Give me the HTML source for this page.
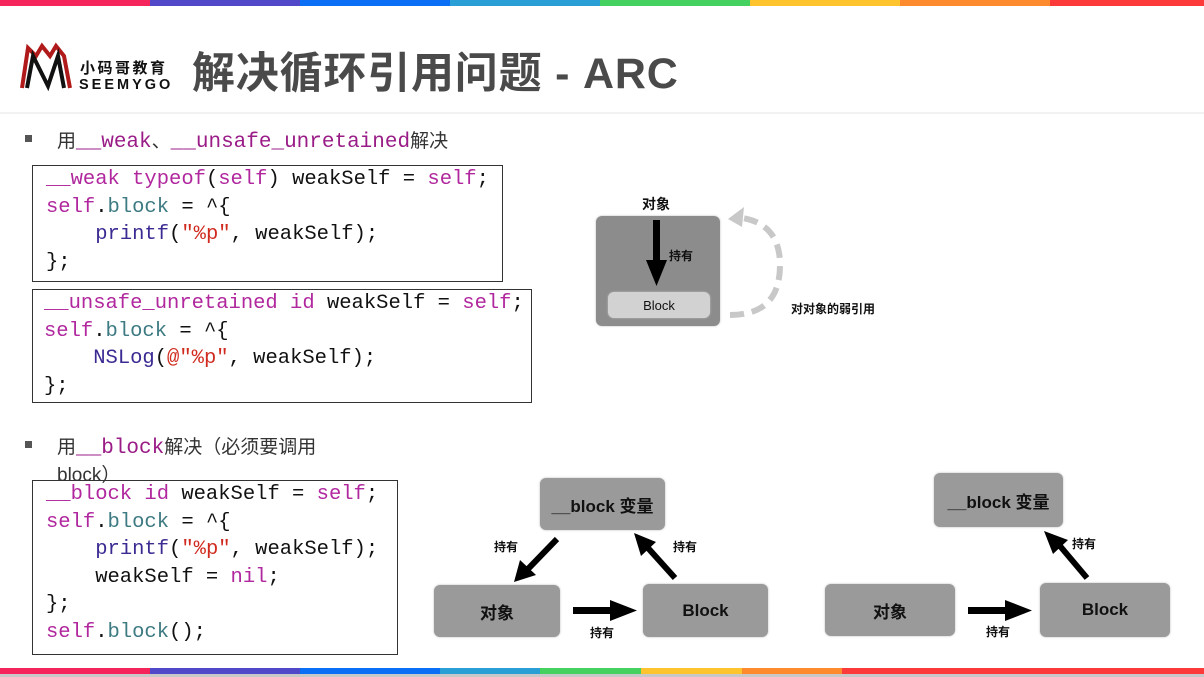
<!DOCTYPE html>
<html><head><meta charset="utf-8"><style>
*{margin:0;padding:0;box-sizing:border-box}
body{width:1204px;height:677px;background:#fff;position:relative;overflow:hidden;font-family:"Liberation Sans","Noto Sans CJK SC",sans-serif}
.bar{position:absolute;height:6px}
.abs{position:absolute;white-space:nowrap}
.code{position:absolute;border:1.5px solid #333;font-family:"Liberation Mono","DejaVu Sans Mono",monospace;font-size:20.5px;line-height:27.5px;color:#111;padding:0 0 0 13px;white-space:pre}
.k{color:#b0279e}.t{color:#3d7a82}.f{color:#3b2a92}.s{color:#d02a1e}
.bullet{position:absolute;width:7px;height:7px;background:#555}
.txt{font-size:19px;color:#333}
.m{font-family:"Liberation Mono",monospace;color:#9a1c87;font-size:21px}
.box{position:absolute;background:#9a9a9a;border-radius:6px;display:flex;align-items:center;justify-content:center;font-size:17px;color:#111;font-weight:bold;box-shadow:0 0 2px #bbb}
.lab{position:absolute;font-size:12px;font-weight:bold;color:#111;white-space:nowrap}
</style></head><body>
<div class="bar" style="top:0;left:0;width:150px;background:#f5245a"></div>
<div class="bar" style="top:0;left:150px;width:150px;background:#5048c8"></div>
<div class="bar" style="top:0;left:300px;width:150px;background:#0a6ff5"></div>
<div class="bar" style="top:0;left:450px;width:150px;background:#2a9fd6"></div>
<div class="bar" style="top:0;left:600px;width:150px;background:#44d160"></div>
<div class="bar" style="top:0;left:750px;width:150px;background:#fdc42d"></div>
<div class="bar" style="top:0;left:900px;width:150px;background:#fd8a2c"></div>
<div class="bar" style="top:0;left:1050px;width:154px;background:#fc3a3a"></div>

<svg class="abs" style="left:18px;top:42px" width="60" height="50" viewBox="0 0 60 50">
<path d="M4 46 L10 6 L18 14 L24 4 L32 14 L38 4 L46 14 L52 46" fill="none" stroke="#b01a1a" stroke-width="4"/>
<path d="M9 46 L15 14 L30 44 L40 14 L46 46" fill="none" stroke="#111" stroke-width="4"/>
</svg>
<div class="abs" style="left:80px;top:59px;font-size:15px;letter-spacing:2.5px;color:#111;font-weight:bold;font-family:'Noto Sans CJK SC',sans-serif;line-height:17px">小码哥教育</div>
<div class="abs" style="left:79px;top:77px;font-size:14.5px;letter-spacing:3px;color:#111;font-weight:bold;line-height:16px">SEEMYGO</div>
<div class="abs" style="left:192px;top:47px;font-size:43px;letter-spacing:0.8px;font-weight:bold;color:#4a4a4a;line-height:54px">解决循环引用问题 - ARC</div>
<div class="abs" style="left:0;top:112px;width:1204px;height:2px;background:#f2f2f2"></div>

<div class="bullet" style="left:25px;top:135px"></div>
<div class="abs txt" style="left:57px;top:126px">用<span class="m">__weak</span>、<span class="m">__unsafe_unretained</span>解决</div>

<div class="code" style="left:32px;top:165px;width:471px;height:117px;padding-top:0"><span class="k">__weak typeof</span>(<span class="k">self</span>) weakSelf = <span class="k">self</span>;
<span class="k">self</span>.<span class="t">block</span> = ^{
    <span class="f">printf</span>(<span class="s">"%p"</span>, weakSelf);
};</div>
<div class="code" style="left:32px;top:289px;width:500px;height:114px;padding-left:11px"><span class="k">__unsafe_unretained id</span> weakSelf = <span class="k">self</span>;
<span class="k">self</span>.<span class="t">block</span> = ^{
    <span class="f">NSLog</span>(<span class="s">@"%p"</span>, weakSelf);
};</div>

<div class="bullet" style="left:25px;top:441px"></div>
<div class="abs txt" style="left:57px;top:432px">用<span class="m">__block</span>解决（必须要调用</div>
<div class="abs txt" style="left:57px;top:460px">block）</div>
<div class="code" style="left:32px;top:480px;width:366px;height:175px"><span class="k">__block id</span> weakSelf = <span class="k">self</span>;
<span class="k">self</span>.<span class="t">block</span> = ^{
    <span class="f">printf</span>(<span class="s">"%p"</span>, weakSelf);
    weakSelf = <span class="k">nil</span>;
};
<span class="k">self</span>.<span class="t">block</span>();</div>

<!-- diagram 1 -->
<div class="lab" style="left:642px;top:194px;font-size:14px">对象</div>
<div class="box" style="left:596px;top:216px;width:124px;height:110px;background:#8c8c8c"></div>
<div class="box" style="left:608px;top:292px;width:102px;height:26px;background:#d2d2d2;font-size:13px;font-weight:normal">Block</div>
<svg class="abs" style="left:640px;top:220px" width="40" height="70"><rect x="13" y="0" width="7" height="42" fill="#000"/><path d="M6 40 L27 40 L16.5 66 Z" fill="#000"/></svg>
<div class="lab" style="left:669px;top:247px">持有</div>
<svg class="abs" style="left:720px;top:205px" width="70" height="120"><path d="M10 110 Q60 110 60 60 Q60 15 14 12" fill="none" stroke="#c8c8c8" stroke-width="6" stroke-dasharray="14 8"/><path d="M8 14 L24 2 L22 22 Z" fill="#c8c8c8"/></svg>
<div class="lab" style="left:791px;top:300px">对对象的弱引用</div>

<!-- diagram 2 -->
<div class="box" style="left:540px;top:478px;width:125px;height:52px">__block 变量</div>
<div class="box" style="left:434px;top:585px;width:126px;height:52px">对象</div>
<div class="box" style="left:643px;top:584px;width:125px;height:53px">Block</div>
<svg class="abs" style="left:420px;top:520px" width="360" height="110">
<line x1="137" y1="19" x2="107" y2="50" stroke="#000" stroke-width="6"/><path d="M94 62 L100 40 L116 55 Z" fill="#000"/>
<line x1="255" y1="58" x2="228" y2="28" stroke="#000" stroke-width="6"/><path d="M214 13 L236 22 L221 36 Z" fill="#000"/>
<rect x="153" y="87" width="40" height="7" fill="#000"/><path d="M190 80 L217 90.5 L190 101 Z" fill="#000"/>
</svg>
<div class="lab" style="left:494px;top:538px">持有</div>
<div class="lab" style="left:673px;top:538px">持有</div>
<div class="lab" style="left:590px;top:624px">持有</div>

<div class="box" style="left:934px;top:473px;width:129px;height:54px">__block 变量</div>
<div class="box" style="left:825px;top:584px;width:130px;height:52px">对象</div>
<div class="box" style="left:1040px;top:583px;width:130px;height:54px">Block</div>
<svg class="abs" style="left:960px;top:520px" width="150" height="110">
<line x1="127" y1="58" x2="100" y2="26" stroke="#000" stroke-width="6"/><path d="M84 11 L108 20 L93 34 Z" fill="#000"/>
<rect x="8" y="87" width="40" height="7" fill="#000"/><path d="M45 80 L72 90.5 L45 101 Z" fill="#000"/>
</svg>
<div class="lab" style="left:1072px;top:535px">持有</div>
<div class="lab" style="left:986px;top:623px">持有</div>

<div class="bar" style="top:668px;left:0;width:150px;background:#f5245a"></div>
<div class="bar" style="top:668px;left:150px;width:150px;background:#5048c8"></div>
<div class="bar" style="top:668px;left:300px;width:140px;background:#0a6ff5"></div>
<div class="bar" style="top:668px;left:440px;width:100px;background:#2a9fd6"></div>
<div class="bar" style="top:668px;left:540px;width:101px;background:#44d160"></div>
<div class="bar" style="top:668px;left:641px;width:101px;background:#fdc42d"></div>
<div class="bar" style="top:668px;left:742px;width:100px;background:#fd8a2c"></div>
<div class="bar" style="top:668px;left:842px;width:362px;background:#fc3a3a"></div>
<div class="abs" style="top:674px;left:0;width:1204px;height:3px;background:#c8c8c8"></div>
</body></html>
